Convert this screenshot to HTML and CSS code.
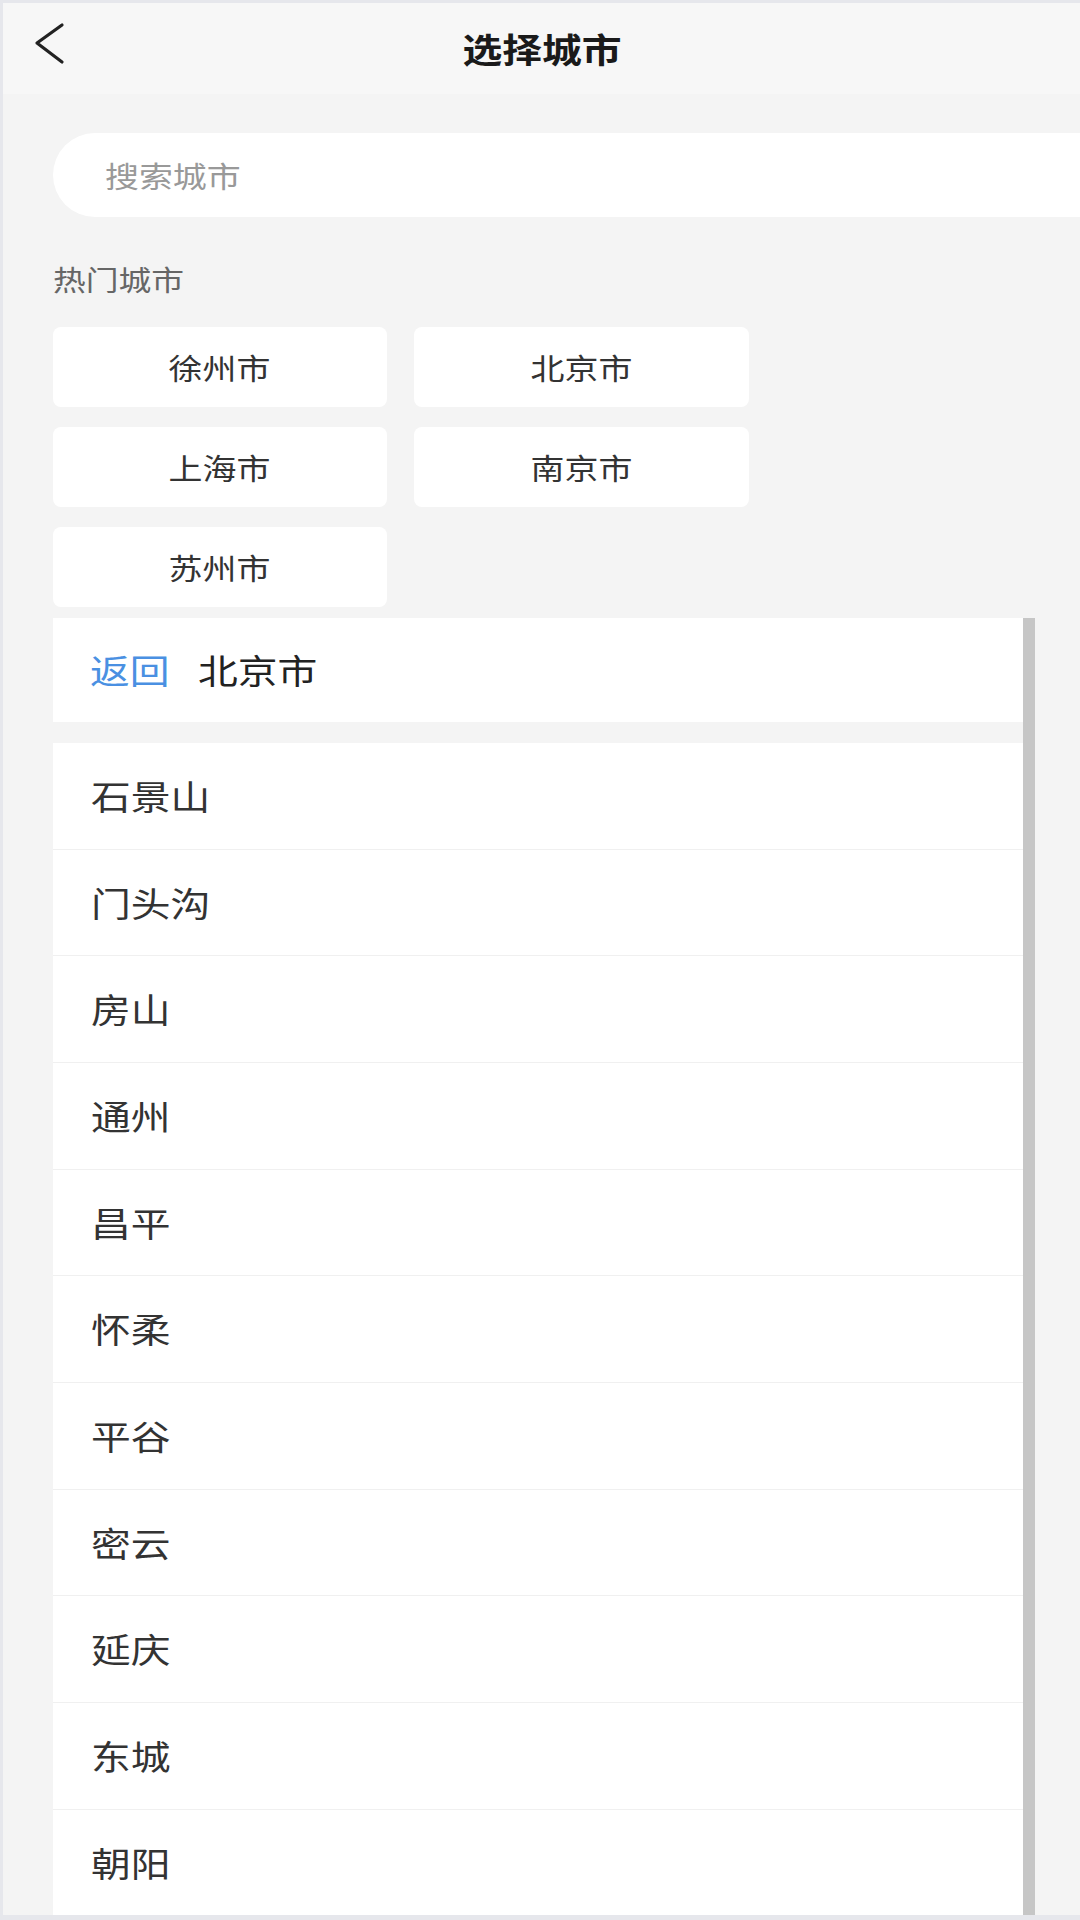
FILE: index.html
```html
<!DOCTYPE html>
<html lang="zh-CN">
<head>
  <meta charset="utf-8">
  <title>选择城市</title>
  <meta name="viewport" content="width=device-width, initial-scale=1.0">
  <link rel="stylesheet" href="styles.css">
</head>
<body>
  <div class="page">
    <!-- Kopfzeile -->
    <header class="topbar">
      <svg class="back" width="34" height="44" viewBox="0 0 34 44">
        <path d="M30 4 L5 22 L30 41" fill="none" stroke="#222" stroke-width="3.2" stroke-linecap="round" stroke-linejoin="round"/>
      </svg>
      <h1 class="title"><span class="sx sx-c">选择城市</span></h1>
      <div></div>
    </header>

    <main class="content">
      <!-- Suche -->
      <div class="search">
        <span class="sx">搜索城市</span>
      </div>

      <div class="section-label"><span class="sx">热门城市</span></div>

      <div class="hot-grid">
        <div class="hot-item"><span class="sx sx-c">徐州市</span></div>
        <div class="hot-item"><span class="sx sx-c">北京市</span></div>
        <div class="hot-item"><span class="sx sx-c">上海市</span></div>
        <div class="hot-item"><span class="sx sx-c">南京市</span></div>
        <div class="hot-item"><span class="sx sx-c">苏州市</span></div>
      </div>

      <!-- Bezirksliste -->
      <div class="panel">
        <div class="panel-head">
          <span class="sx back-link">返回</span>
          <span class="sx current">北京市</span>
        </div>
        <ul class="district-list">
          <li><span class="sx">石景山</span></li>
          <li><span class="sx">门头沟</span></li>
          <li><span class="sx">房山</span></li>
          <li><span class="sx">通州</span></li>
          <li><span class="sx">昌平</span></li>
          <li><span class="sx">怀柔</span></li>
          <li><span class="sx">平谷</span></li>
          <li><span class="sx">密云</span></li>
          <li><span class="sx">延庆</span></li>
          <li><span class="sx">东城</span></li>
          <li><span class="sx">朝阳</span></li>
        </ul>
      </div>
    </main>
  </div>
</body>
</html>
```

FILE: styles.css
```css
/* Stadtauswahl – schlichte Mobilansicht */
body {
  margin: 0;
  padding: 0;
  font-family: "Noto Sans CJK SC", "Noto Sans", sans-serif;
  background: #f4f4f4;
  color: #333;
}
.page {
  height: 1920px;
  box-sizing: border-box;
  overflow: hidden;
  border-top: 3px solid #e6e7ec;
  border-left: 3px solid #e6e7ec;
  border-bottom: 5px solid #e6e7ec;
  background: #f4f4f4;
}
/* Text ist im Original horizontal gestreckt */
.sx {
  display: inline-block;
  transform: scaleX(1.17);
  transform-origin: left center;
  white-space: nowrap;
}
.sx-c {
  transform-origin: center center;
}
.topbar {
  display: grid;
  grid-template-columns: 1fr auto 1fr;
  height: 91px;
  background: #f7f7f7;
}
.back {
  display: block;
  margin: 18px 0 0 29px;
}
.title {
  margin: 0;
  font-size: 34px;
  font-weight: bold;
  line-height: 91px;
  color: #1a1a1a;
}
.content {
  padding-left: 50px;
}
.search {
  margin-top: 39px;
  margin-right: -60px;
  height: 84px;
  border-radius: 42px;
  background: #fff;
  padding-left: 52px;
  font-size: 29px;
  line-height: 84px;
  color: #999;
}
.section-label {
  margin-top: 42px;
  margin-bottom: 28px;
  font-size: 28px;
  line-height: 40px;
  color: #666;
}
.hot-grid {
  display: grid;
  grid-template-columns: 334px 335px;
  column-gap: 27px;
  row-gap: 20px;
}
.hot-item {
  height: 80px;
  border-radius: 8px;
  background: #fff;
  text-align: center;
  font-size: 29px;
  line-height: 80px;
  color: #333;
}
.panel {
  margin-top: 11px;
  width: 970px;
  border-right: 12px solid #c6c6c6;
}
.panel-head {
  height: 104px;
  background: #fff;
  padding-left: 37px;
  font-size: 34px;
  line-height: 104px;
  margin-bottom: 21px;
}
.back-link {
  color: #4a90e2;
}
.current {
  margin-left: 32px;
  color: #222;
}
.district-list {
  list-style: none;
  margin: 0;
  padding: 0;
  background: #fff;
}
.district-list li {
  box-sizing: border-box;
  height: 106.67px;
  padding-left: 38px;
  border-bottom: 1px solid #f0f0f0;
  font-size: 34px;
  line-height: 105px;
  color: #333;
}
```
